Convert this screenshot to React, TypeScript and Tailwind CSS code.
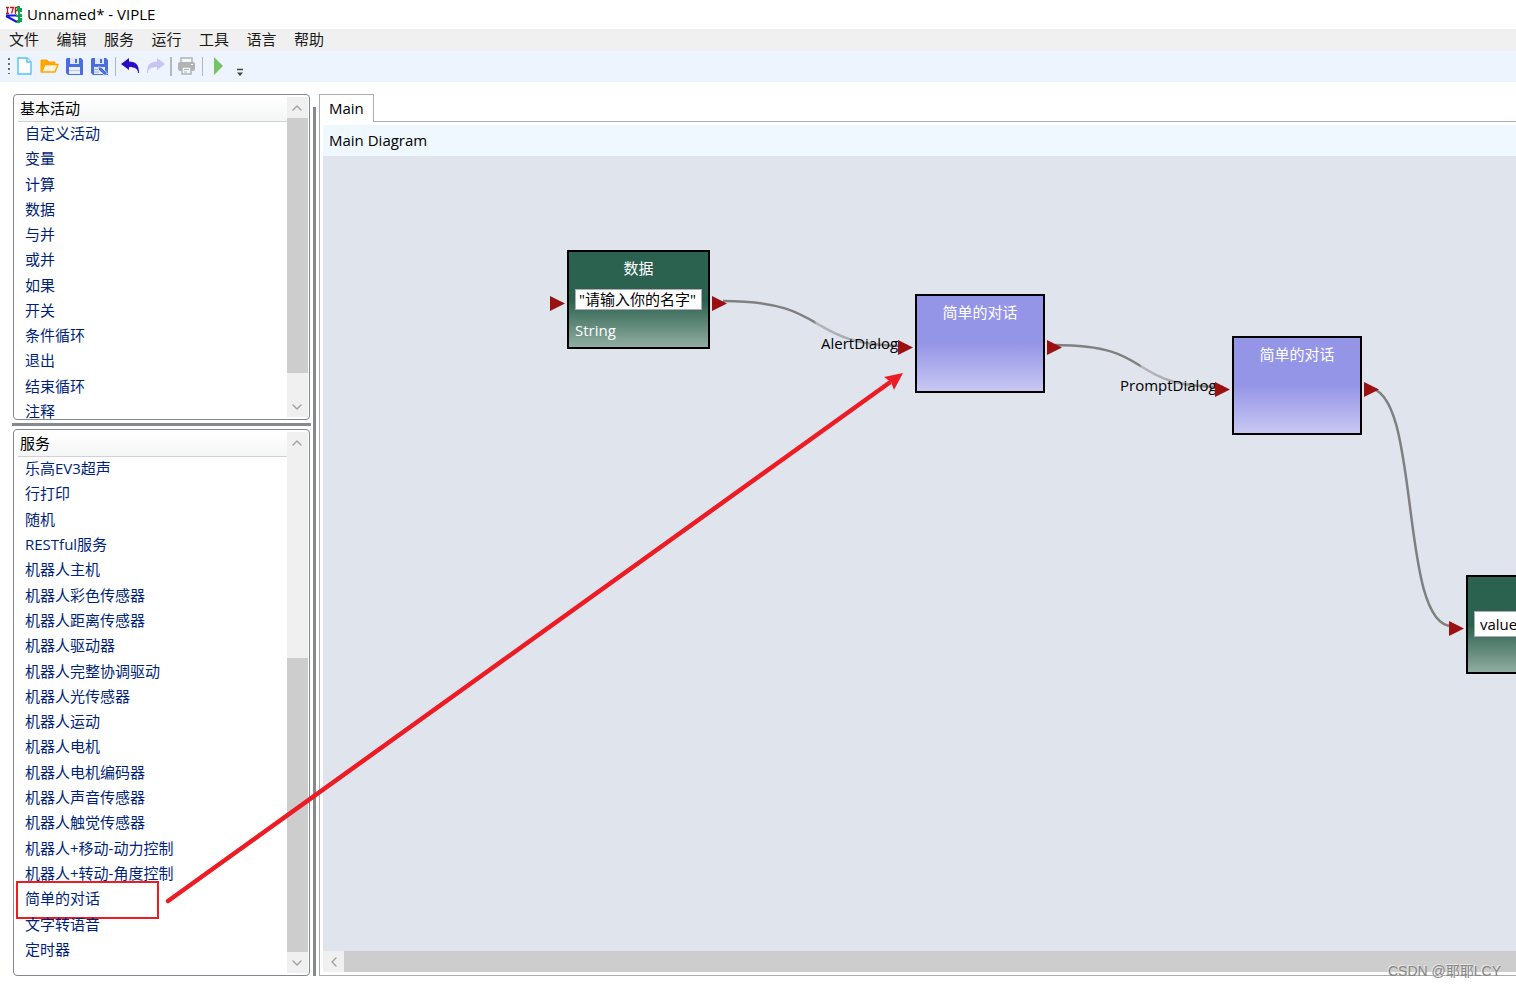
import React from 'react';
import { ChevronDown, ChevronLeft, ChevronUp } from 'lucide-react';

const menus = ['文件', '编辑', '服务', '运行', '工具', '语言', '帮助'];

const activities = [
  '自定义活动', '变量', '计算', '数据', '与并', '或并',
  '如果', '开关', '条件循环', '退出', '结束循环', '注释',
];

const services = [
  '乐高EV3超声', '行打印', '随机', 'RESTful服务', '机器人主机',
  '机器人彩色传感器', '机器人距离传感器', '机器人驱动器', '机器人完整协调驱动',
  '机器人光传感器', '机器人运动', '机器人电机', '机器人电机编码器',
  '机器人声音传感器', '机器人触觉传感器', '机器人+移动-动力控制',
  '机器人+转动-角度控制', '简单的对话', '文字转语音', '定时器',
];

interface DiagramNode {
  id: string;
  kind: 'data' | 'service';
  title: string;
  x: number;
  y: number;
  value?: string;
  type?: string;
  hasOutput: boolean;
}

const nodes: DiagramNode[] = [
  { id: 'data', kind: 'data', title: '数据', x: 244, y: 94, value: '"请输入你的名字"', type: 'String', hasOutput: true },
  { id: 'alert', kind: 'service', title: '简单的对话', x: 592, y: 138, hasOutput: true },
  { id: 'prompt', kind: 'service', title: '简单的对话', x: 909, y: 180, hasOutput: true },
  { id: 'value', kind: 'data', title: '', x: 1143, y: 419, value: 'value', hasOutput: false },
];

function AppLogo() {
  return (
    <svg width="18" height="18" viewBox="0 0 18 18">
      <path d="M1 1.500h3M2.500 2v5M1 7.500h3M5 1.500h3.500L6.500 7.500M10.500 1v7M10.500 1.500H13v3h-2.500" fill="none" stroke="#c8141e" strokeWidth="1.300" />
      <path d="M1 9.500h11M1 10l11 6" fill="none" stroke="#1414f0" strokeWidth="2" />
      <path d="M12 0h3v2h2v4h-2v2h2v3h-2v1h2v4h-2v1h-3v-3h1v-3h-2v-2h2V5h-1z" fill="#0aa54a" />
    </svg>
  );
}

function ToolButton({ label, children }: { label: string; children: React.ReactNode }) {
  return (
    <button aria-label={label} className="flex h-6 w-[25px] items-center justify-center">
      {children}
    </button>
  );
}

function Separator({ thick }: { thick?: boolean }) {
  return (
    <div className="flex w-[6px] justify-center">
      <div className={thick ? 'h-[19px] w-[2px] bg-[#b4b8bd]' : 'h-[19px] w-px bg-[#b4b8bd]'} />
    </div>
  );
}

function Floppy({ edit }: { edit?: boolean }) {
  return (
    <svg width="19" height="19" viewBox="0 0 19 19">
      <path d="M2 1h14l2 2v15H3l-2-2V2z" fill="#4a6ee0" />
      <path d="M5 1h9v6H5z" fill="#dfe8fb" />
      <path d="M10 2h2v4h-2z" fill="#4a6ee0" />
      <path d="M4 10h11v7H4z" fill="#e9effc" />
      {edit ? (
        <>
          <path d="M4 12.500h4M4 15h5" stroke="#8ea5ec" />
          <path d="M8 10l3 0 6.500 6-2.500 2.500L8.500 13z" fill="#4a6ee0" stroke="#e9effc" strokeWidth="0.800" />
        </>
      ) : (
        <path d="M4 13.500h11" stroke="#b9c8f3" />
      )}
    </svg>
  );
}

function Toolbar() {
  return (
    <div className="flex h-[31px] items-center bg-[#edf4fd] pb-px pl-[8px]">
      <svg width="4" height="18" viewBox="0 0 4 18">
        <path d="M1 1v16" stroke="#6d6d6d" strokeWidth="2" strokeDasharray="2 3" />
      </svg>
      <ToolButton label="新建">
        <svg width="16" height="18" viewBox="0 0 16 18" fill="#fff" stroke="#4fc3f7" strokeWidth="1.400">
          <path d="M1 1h9l4 4v12H1z" />
          <path d="M10 1v4h4" />
        </svg>
      </ToolButton>
      <ToolButton label="打开">
        <svg width="19" height="16" viewBox="0 0 19 16">
          <path d="M1 14V2h6l2 2h6v3" fill="#ffa500" stroke="#ffa500" />
          <path d="M1.500 14L5 6.500h13L15 14z" fill="#fff3dc" stroke="#ffa500" strokeWidth="1.500" />
        </svg>
      </ToolButton>
      <ToolButton label="保存">
        <Floppy />
      </ToolButton>
      <ToolButton label="另存为">
        <Floppy edit />
      </ToolButton>
      <Separator />
      <ToolButton label="撤销">
        <svg width="19" height="16" viewBox="0 0 19 16">
          <path d="M0 6l8-6v3.500c7 0 10 3.500 10 11.500h-1c0-4-3-6-9-6V12z" fill="#2a0bc8" />
        </svg>
      </ToolButton>
      <ToolButton label="重做">
        <svg width="19" height="16" viewBox="0 0 19 16">
          <path d="M19 6l-8-6v3.500C4 3.500 1 7 1 15h1c0-4 3-6 9-6V12z" fill="#c9c5f3" />
        </svg>
      </ToolButton>
      <Separator thick />
      <ToolButton label="打印">
        <svg width="19" height="19" viewBox="0 0 19 19">
          <path d="M4 1h11v5H4z" fill="#f3f6fa" stroke="#b3b3b3" strokeWidth="1.500" />
          <rect x="1" y="5" width="17" height="9" rx="2" fill="#b3b3b3" />
          <path d="M5 10h9v7H5z" fill="#f3f6fa" stroke="#b3b3b3" strokeWidth="1.500" />
          <path d="M7 12.500h5M7 15h3" stroke="#b3b3b3" />
          <path d="M14 7.500h2" stroke="#fff" />
        </svg>
      </ToolButton>
      <Separator />
      <ToolButton label="运行">
        <svg width="10" height="18" viewBox="0 0 10 18">
          <path d="M1 0l9 9-9 9z" fill="#74c365" />
        </svg>
      </ToolButton>
      <button aria-label="更多" className="flex h-[30px] w-5 items-end justify-center pb-1">
        <svg width="8" height="9" viewBox="0 0 8 9">
          <path d="M1 1.500h6" stroke="#444" strokeWidth="1.500" />
          <path d="M1 4.500h6l-3 3.500z" fill="#444" />
        </svg>
      </button>
    </div>
  );
}

interface ListPanelProps {
  title: string;
  items: string[];
  className: string;
  listClassName: string;
  highlighted?: string;
  scroll: { before: number; thumb: number; after: number };
}

function ListPanel({ title, items, className, listClassName, highlighted, scroll }: ListPanelProps) {
  return (
    <section className={`flex rounded-sm border border-[#828790] bg-white py-[2px] pr-px pl-1 ${className}`}>
      <div className="flex min-w-0 flex-1 flex-col">
        <h2 className="h-[25px] shrink-0 border-b border-[#d0d2d4] bg-linear-to-b from-white to-[#f4f5f5] pl-[2px] leading-[22px] text-black">
          {title}
        </h2>
        <ul className={`-mt-px grid shrink-0 auto-rows-fr text-[#001f7a] ${listClassName}`}>
          {items.map((item) => (
            <li key={item} className="relative flex items-center pl-[7px]">
              <a href="#" className="leading-[23px]">{item}</a>
              {item === highlighted && (
                <span className="absolute -top-[5px] -left-[2px] h-[38px] w-[143px] border-2 border-[#ed1c24]" />
              )}
            </li>
          ))}
        </ul>
      </div>
      <div className="flex w-[21px] shrink-0 flex-col bg-[#f0f0f0] text-[#a0a0a0]">
        <button aria-label="向上" className="flex h-[21px] items-center justify-center">
          <ChevronUp size={16} className="-ml-px" />
        </button>
        <div style={{ flexGrow: scroll.before }} />
        <div className="bg-[#cdcdcd]" style={{ flexGrow: scroll.thumb }} />
        <div style={{ flexGrow: scroll.after }} />
        <button aria-label="向下" className="flex h-[21px] items-center justify-center">
          <ChevronDown size={16} className="-ml-px" />
        </button>
      </div>
    </section>
  );
}

function Port() {
  return (
    <svg width="15" height="15" viewBox="0 0 15 15">
      <path d="M0 0l15 7.500L0 15z" fill="#9b1010" />
    </svg>
  );
}

function NodeCard({ node }: { node: DiagramNode }) {
  const isData = node.kind === 'data';
  return (
    <div className="absolute flex items-center gap-[2px]" style={{ left: node.x - 17, top: node.y }}>
      <div className="mt-[7px]"><Port /></div>
      <div
        className={
          isData
            ? 'flex h-[99px] w-[143px] flex-col border-2 border-black bg-linear-to-b from-[#2a614f] from-50% to-[#90ada2] px-[6px] text-white'
            : 'flex h-[99px] w-[130px] flex-col border-2 border-black bg-linear-to-b from-[#9595e7] from-50% to-[#c9c7f2] px-[6px] text-white'
        }
      >
        <h3 className="h-[34px] pt-1 text-center leading-6">{node.title}</h3>
        {isData && (
          <input
            aria-label={node.title || 'value'}
            defaultValue={node.value}
            className={
              node.type
                ? 'mt-[3px] h-[21px] w-full border border-[#abadb3] bg-white px-[3px] text-black'
                : 'h-[26px] w-full border border-[#abadb3] bg-white px-[5px] text-black'
            }
          />
        )}
        {node.type && <span className="mt-2 leading-6">{node.type}</span>}
      </div>
      {node.hasOutput && <div className="mt-[7px]"><Port /></div>}
    </div>
  );
}

function Links() {
  return (
    <svg className="absolute top-0 left-0" width="1193" height="795" fill="none" strokeWidth="2.500">
      <defs>
        <linearGradient id="alertLink" gradientUnits="userSpaceOnUse" x1="396" y1="0" x2="576" y2="0">
          <stop offset="0.53" stopColor="#808080" />
          <stop offset="0.54" stopColor="#b4b6ba" />
          <stop offset="0.75" stopColor="#a8aaad" />
          <stop offset="1" stopColor="#808080" />
        </linearGradient>
        <linearGradient id="promptLink" gradientUnits="userSpaceOnUse" x1="732" y1="0" x2="895" y2="0">
          <stop offset="0.52" stopColor="#808080" />
          <stop offset="0.53" stopColor="#b4b6ba" />
          <stop offset="0.75" stopColor="#a8aaad" />
          <stop offset="1" stopColor="#808080" />
        </linearGradient>
      </defs>
      <path d="M400 145C511 145 478 190 584 190" stroke="url(#alertLink)" />
      <path d="M732 189C836 189 800 231 900 231" stroke="url(#promptLink)" />
      <path d="M1045 232C1099 232 1075 470 1129 470" stroke="#808080" />
    </svg>
  );
}

function Diagram() {
  return (
    <div className="relative flex-1 overflow-hidden bg-[#e0e4ed]">
      <Links />
      <span className="absolute top-[175px] left-[498px] leading-6 text-black">AlertDialog</span>
      <span className="absolute top-[217px] left-[797px] leading-6 text-black">PromptDialog</span>
      {nodes.map((node) => (
        <NodeCard key={node.id} node={node} />
      ))}
    </div>
  );
}

export default function App() {
  return (
    <div className="relative flex h-screen flex-col overflow-hidden bg-white font-['Open_Sans','Noto_Sans_CJK_SC',sans-serif] text-[15px] text-[#1a1a1a]">
      <header className="flex h-[29px] shrink-0 items-center gap-1 pl-[5px] text-black">
        <AppLogo />
        <h1>Unnamed* - VIPLE</h1>
      </header>
      <nav className="h-[22px] shrink-0 bg-[#f0f0f0] pl-[9px]">
        <div className="flex w-[315px] justify-between">
          {menus.map((menu) => (
            <button key={menu} className="leading-5">{menu}</button>
          ))}
        </div>
      </nav>
      <Toolbar />

      <main className="flex min-h-0 flex-1 pt-3 pb-[11px] pl-[13px]">
        <aside className="flex w-[297px] shrink-0 flex-col gap-[3px]">
          <ListPanel
            title="基本活动"
            items={activities}
            className="h-[326px] shrink-0 overflow-hidden"
            listClassName="h-[303px]"
            scroll={{ before: 0, thumb: 255, after: 23 }}
          />
          <div className="-mx-px h-[3px] shrink-0 bg-[#86898d]" />
          <ListPanel
            title="服务"
            items={services}
            className="min-h-0 flex-1"
            listClassName="h-[506px]"
            highlighted="简单的对话"
            scroll={{ before: 205, thumb: 294, after: 0 }}
          />
        </aside>
        <div className="mt-[13px] ml-[3px] w-[3px] shrink-0 bg-[#86898d]" />

        <section className="ml-[3px] flex min-w-0 flex-1 flex-col">
          <div className="z-10 -mb-px flex">
            <button className="h-7 border border-b-0 border-[#acacac] bg-white px-[9px] pb-px text-black">Main</button>
          </div>
          <div className="flex min-h-0 flex-1 flex-col border border-r-0 border-[#acacac] pt-[3px] pb-[3px] pl-[3px]">
            <h2 className="h-[31px] shrink-0 bg-[#f0f8ff] pl-[6px] leading-[31px] text-black">Main Diagram</h2>
            <Diagram />
            <div className="flex h-[21px] shrink-0 bg-[#cdcdcd]">
              <button aria-label="向左" className="flex w-[21px] items-center justify-center bg-[#f0f0f0] text-[#a0a0a0]">
                <ChevronLeft size={16} />
              </button>
            </div>
          </div>
        </section>
      </main>

      <svg className="pointer-events-none absolute top-0 left-0 z-20" width="920" height="920">
        <path d="M168 901L889 383" stroke="#ed1c24" strokeWidth="4.500" strokeLinecap="round" />
        <path d="M903 373l-19 4 7 5 3 8z" fill="#ed1c24" />
      </svg>
      <footer className="absolute right-[15px] bottom-[6px] z-20 font-['Liberation_Sans','Noto_Sans_CJK_SC',sans-serif] text-sm text-[#858585] [text-shadow:-1px_-1px_0_#e8e8e8]">
        CSDN @耶耶LCY
      </footer>
    </div>
  );
}
